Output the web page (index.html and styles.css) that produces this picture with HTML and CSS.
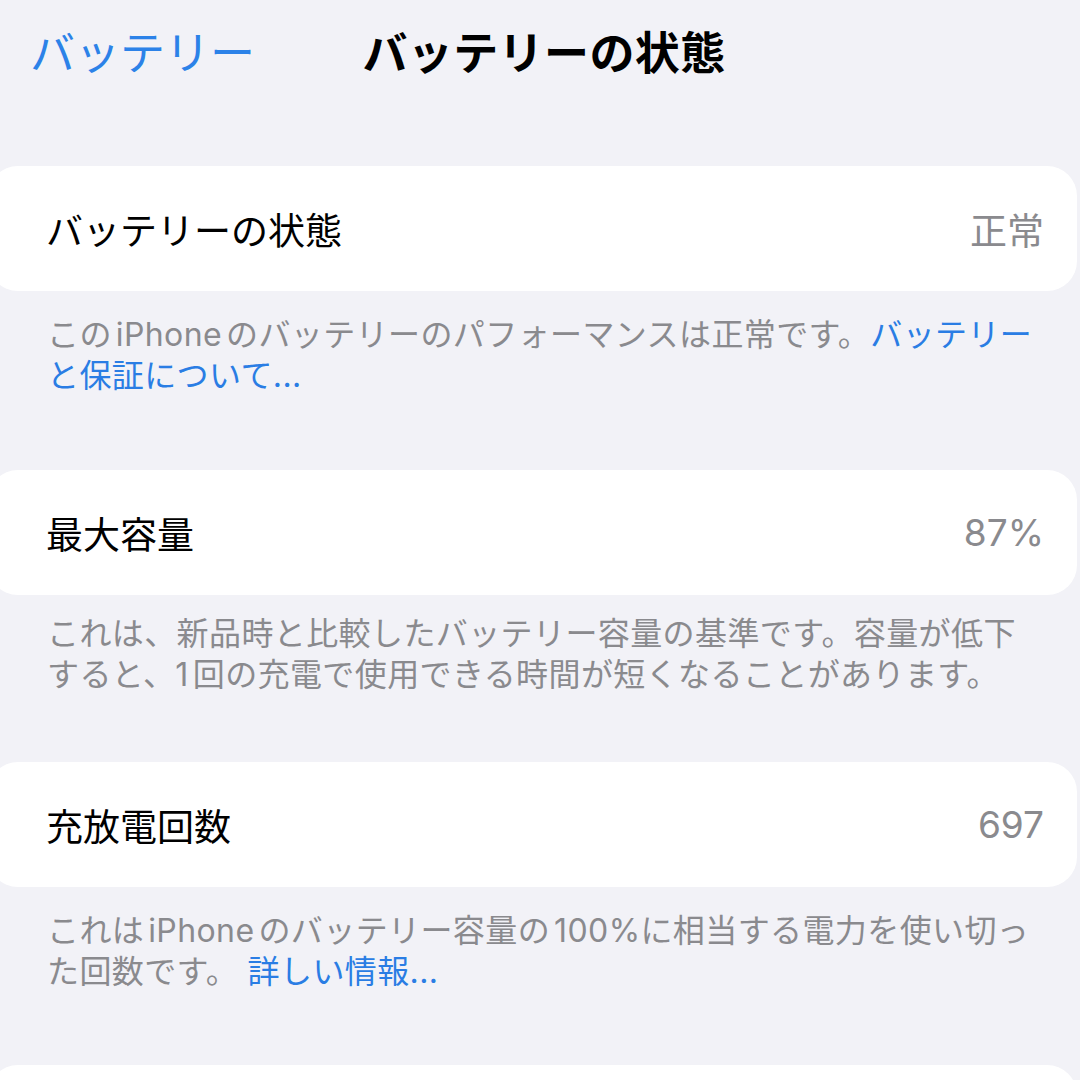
FILE: index.html
```html
<!DOCTYPE html>
<html lang="ja">
<head>
    <meta charset="UTF-8">
    <meta name="viewport" content="width=device-width, initial-scale=1.0">
    <title>バッテリーの状態</title>
    <link rel="stylesheet" href="styles.css">
</head>
<body>
    <header class="nav">
        <a class="nav-back" href="#">バッテリー</a>
        <h1 class="nav-title">バッテリーの状態</h1>
        <span></span>
    </header>

    <section class="group health">
        <div class="card">
            <span class="card-label">バッテリーの状態</span>
            <span class="card-value">正常</span>
        </div>
        <p class="footer">このiPhoneのバッテリーのパフォーマンスは正常です。<a href="#">バッテリー<br>と保証について...</a></p>
    </section>

    <section class="group capacity">
        <div class="card">
            <span class="card-label">最大容量</span>
            <span class="card-value">87%</span>
        </div>
        <p class="footer">これは、新品時と比較したバッテリー容量の基準です。容量が低下<br>すると、1回の充電で使用できる時間が短くなることがあります。</p>
    </section>

    <section class="group cycles">
        <div class="card">
            <span class="card-label">充放電回数</span>
            <span class="card-value">697</span>
        </div>
        <p class="footer">これはiPhoneのバッテリー容量の100%に相当する電力を使い切っ<br>た回数です。 <a href="#">詳しい情報...</a></p>
    </section>

    <section class="group">
        <div class="card"></div>
    </section>
</body>
</html>
```

FILE: styles.css
```css
body {
    font-family: Inter, "Noto Sans CJK JP", sans-serif;
    background-color: #f2f2f7;
    margin: 0;
    padding: 0;
    width: 1080px;
    height: 1080px;
    overflow: hidden;
    text-autospace: normal;
}

a {
    color: #2a7de4;
    text-decoration: none;
}

.nav {
    display: grid;
    grid-template-columns: 1fr auto 1fr;
    align-items: center;
    height: 100px;
    margin-bottom: 66px;
}

.nav-back {
    font-size: 45px;
    font-weight: 400;
    padding-left: 30px;
    color: #2c82e8;
}

.nav-title {
    margin: 0;
    font-size: 45px;
    font-weight: 700;
    color: #000;
    padding-left: 8px;
    letter-spacing: 0.4px;
}

.group {
    height: 300px;
}

/* section spacing differs a little in the screenshot */
.group.health {
    height: 304px;
}

.group.capacity {
    height: 292px;
}

.group.cycles {
    height: 303px;
}

.card {
    display: flex;
    align-items: center;
    justify-content: space-between;
    height: 125px;
    margin-left: -12px;
    margin-right: 3px;
    padding: 0 33px 0 58px;
    background-color: #fff;
    border-radius: 30px;
}

.card-label {
    font-size: 37px;
    color: #000;
}

.card-value {
    font-size: 37px;
    color: #8a8a8e;
}

.footer {
    margin: 0;
    padding: 23px 0 0 47px;
    font-size: 32px;
    line-height: 41px;
    letter-spacing: 0.4px;
    color: #8a8a8e;
    white-space: nowrap;
}

.capacity .footer {
    padding-top: 18px;
}
```
